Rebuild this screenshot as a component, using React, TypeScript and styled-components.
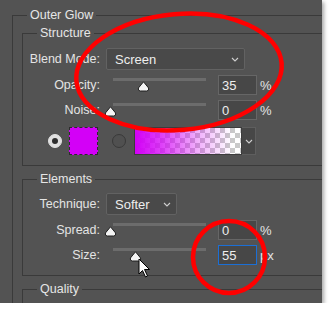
import React from 'react';
import styled, { createGlobalStyle } from 'styled-components';

const GlobalStyle = createGlobalStyle`
  html, body {
    margin: 0;
    padding: 0;
    background: #ffffff;
  }
  body {
    font-family: 'Liberation Sans', Arial, sans-serif;
  }
`;

const Panel = styled.div`
  position: relative;
  width: 322px;
  height: 303px;
  box-sizing: border-box;
  padding: 7px 0 0 12px;
  background: #535353;
  overflow: hidden;
  box-shadow: 2px 2px 4px rgba(0, 0, 0, 0.35);
  color: #e4e4e4;
  font-size: 12.5px;
`;

const Group = styled.fieldset<{ $inner?: boolean; $gap?: number }>`
  margin: ${(p) => p.$gap ?? 0}px 0 0 0;
  min-width: 0;
  border: 1px solid #3a3a3a;
  border-right: none;
  border-bottom: ${(p) => (p.$inner ? '1px solid #3a3a3a' : 'none')};
  padding: ${(p) => (p.$inner ? '0 0 10px 0' : '2px 0 0 9px')};
`;

const Legend = styled.legend<{ $inner?: boolean }>`
  margin-left: ${(p) => (p.$inner ? 14 : 5)}px;
  padding: 0 3px;
  line-height: 16px;
  font-size: 12.5px;
  color: #e6e6e6;
`;

const Row = styled.div<{ $gap: number; $h: number }>`
  display: flex;
  align-items: center;
  height: ${(p) => p.$h}px;
  margin-top: ${(p) => p.$gap}px;
`;

const Label = styled.div`
  width: 77px;
  margin-right: 6px;
  text-align: right;
  white-space: nowrap;
`;

const Select = styled.div<{ $w: number }>`
  display: flex;
  align-items: center;
  justify-content: space-between;
  box-sizing: border-box;
  width: ${(p) => p.$w}px;
  height: 22px;
  padding: 0 5px 0 8px;
  background: #494949;
  border: 1px solid #626262;
  border-radius: 2px;
  font-size: 13px;
  color: #eeeeee;
`;

const Chevron = () => (
  <svg width="8" height="5" viewBox="0 0 8 5">
    <polyline points="1,1 4,4 7,1" fill="none" stroke="#cfcfcf" strokeWidth="1.1" />
  </svg>
);

const SliderBox = styled.div`
  position: relative;
  align-self: stretch;
  width: 93px;
  margin-left: 7px;
`;

const Track = styled.div`
  margin-top: 3px;
  height: 3px;
  background: #6c6c6c;
`;

const Thumb = styled.svg`
  position: absolute;
  top: 6px;
`;

const Slider = ({ pct }: { pct: number }) => (
  <SliderBox>
    <Track />
    <Thumb width="13" height="11" viewBox="0 0 13 11" style={{ left: -9 + pct * 93 }}>
      <path d="M6.5 0.8 L11.6 7 Q12.4 10 9.6 10 L3.4 10 Q0.6 10 1.4 7 Z" fill="#f4f4f4" stroke="#1e1e1e" strokeWidth="1" />
    </Thumb>
  </SliderBox>
);

const Field = styled.div<{ $focus?: boolean }>`
  box-sizing: border-box;
  width: 39px;
  height: 20px;
  margin-left: 12px;
  padding: 2px 0 0 3px;
  background: #474747;
  border: 1px solid ${(p) => (p.$focus ? '#1b6fd6' : '#666666')};
  font-size: 13px;
  color: #eeeeee;
`;

const Unit = styled.span`
  margin-left: 3px;
  font-size: 13px;
`;

const Radio = styled.div<{ $on?: boolean }>`
  box-sizing: border-box;
  display: flex;
  align-items: center;
  justify-content: center;
  width: 14px;
  height: 14px;
  border-radius: 50%;
  background: ${(p) => (p.$on ? '#e0e0e0' : '#505050')};
  border: 1px solid ${(p) => (p.$on ? '#e0e0e0' : '#393939')};
  &::after {
    content: '';
    display: ${(p) => (p.$on ? 'block' : 'none')};
    width: 6px;
    height: 6px;
    border-radius: 50%;
    background: #2e2e2e;
  }
`;

const Swatch = styled.div`
  box-sizing: border-box;
  width: 29px;
  height: 28px;
  margin-left: 7px;
  background: #d300f7;
  border: 1px dashed #2c2c2c;
`;

const GradientBar = styled.div`
  box-sizing: border-box;
  width: 108px;
  height: 28px;
  margin-left: 8px;
  border: 1px solid #3c3c3c;
  background:
    linear-gradient(to right, rgba(211, 0, 247, 1) 0%, rgba(211, 0, 247, 0.75) 25%, rgba(211, 0, 247, 0.3) 60%, rgba(211, 0, 247, 0) 92%),
    repeating-conic-gradient(#c9c9c9 0% 25%, #ffffff 0% 50%) 0 0 / 10px 10px;
`;

const GradientButton = styled.div`
  box-sizing: border-box;
  display: flex;
  align-items: center;
  justify-content: center;
  width: 14px;
  height: 28px;
  background: #474747;
  border: 1px solid #5e5e5e;
  border-left: none;
`;

const Overlay = styled.svg`
  position: absolute;
  left: 0;
  top: 0;
  pointer-events: none;
`;

export default function App() {
  return (
    <>
      <GlobalStyle />
      <Panel>
        <Group>
          <Legend>Outer Glow</Legend>
          <Group $inner>
            <Legend $inner>Structure</Legend>
            <Row $gap={7} $h={22}>
              <Label>Blend Mode:</Label>
              <Select $w={139}>
                <span>Screen</span>
                <Chevron />
              </Select>
            </Row>
            <Row $gap={5} $h={20}>
              <Label>Opacity:</Label>
              <Slider pct={0.35} />
              <Field>35</Field>
              <Unit>%</Unit>
            </Row>
            <Row $gap={5} $h={20}>
              <Label>Noise:</Label>
              <Slider pct={0} />
              <Field>0</Field>
              <Unit>%</Unit>
            </Row>
            <Row $gap={7} $h={28}>
              <Label />
              <Radio $on style={{ marginLeft: -58 }} />
              <Swatch />
              <Radio style={{ marginLeft: 14 }} />
              <GradientBar />
              <GradientButton>
                <Chevron />
              </GradientButton>
            </Row>
          </Group>
          <Group $inner $gap={5}>
            <Legend $inner>Elements</Legend>
            <Row $gap={6} $h={22}>
              <Label>Technique:</Label>
              <Select $w={71}>
                <span>Softer</span>
                <Chevron />
              </Select>
            </Row>
            <Row $gap={5} $h={20}>
              <Label>Spread:</Label>
              <Slider pct={0} />
              <Field>0</Field>
              <Unit>%</Unit>
            </Row>
            <Row $gap={5} $h={20}>
              <Label>Size:</Label>
              <Slider pct={0.27} />
              <Field $focus>55</Field>
              <Unit>px</Unit>
            </Row>
          </Group>
          <Group $inner $gap={5}>
            <Legend $inner>Quality</Legend>
          </Group>
        </Group>
        <Overlay width="322" height="303" viewBox="0 0 322 303">
          <path
            d="M139 259 L139 274 L142.5 270.5 L145.5 277 L147.5 276 L144.5 269.5 L149.5 269.5 Z"
            fill="#ffffff"
            stroke="#000000"
            strokeWidth="1"
            strokeLinejoin="round"
          />
          <ellipse cx="179" cy="72" rx="103" ry="58" transform="rotate(-5 179 72)" fill="none" stroke="#ff0000" strokeWidth="4.5" />
          <circle cx="229" cy="257" r="36" fill="none" stroke="#ff0000" strokeWidth="4.5" />
        </Overlay>
      </Panel>
    </>
  );
}
